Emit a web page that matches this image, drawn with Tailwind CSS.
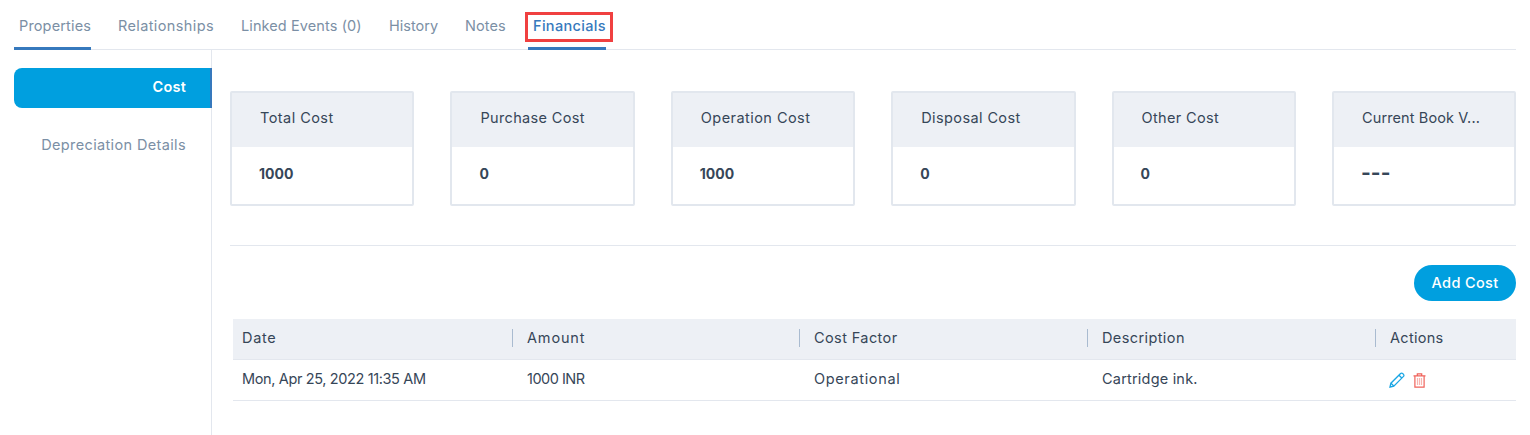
<!DOCTYPE html>
<html lang="en">
<head>
  <meta charset="UTF-8" />
  <title>Financials</title>
  <script src="https://cdn.jsdelivr.net/npm/@tailwindcss/browser@4"></script>
</head>
<body class="bg-white h-[435px] overflow-hidden font-['Inter','Noto_Sans',sans-serif] text-[14.5px] text-[#364658]">
  <div class="pl-[14px] pr-[14px]">
    <!-- tabs -->
    <nav class="flex items-start h-[50px] border-b border-[#e3e7ee] text-[#7b8fa5]">
      <a class="block h-[50px] w-[77px] pl-[5px] pt-[15px] border-b-[3px] border-[#3679bd] tracking-[0.15px]">Properties</a>
      <a class="block h-[50px] ml-[27px] w-[96px] pt-[15px] tracking-[0.38px] whitespace-nowrap">Relationships</a>
      <a class="block h-[50px] ml-[27px] w-[121px] pt-[15px] tracking-[0.1px] whitespace-nowrap">Linked Events (0)</a>
      <a class="block h-[50px] ml-[27px] w-[49px] pt-[15px]">History</a>
      <a class="block h-[50px] ml-[27px] w-[41px] pt-[15px] tracking-[0.1px]">Notes</a>
      <a class="relative block h-[50px] ml-[22px] w-[78px] pl-[5px] pt-[15px] border-b-[3px] border-[#3679bd] text-[#3679bd] font-medium tracking-[0.33px]">
        Financials
        <span class="absolute left-[-3px] top-[12px] w-[88px] h-[30px] border-[3px] border-[#f04040]"></span>
      </a>
    </nav>

    <div class="flex">
      <!-- side menu -->
      <aside class="w-[198px] h-[385px] shrink-0 border-r border-[#e3e7ee] pt-[18px] text-right">
        <div class="h-[40px] -mr-px flex items-center justify-end pr-[24px] pb-[2px] bg-[#009fdf] text-white font-semibold tracking-[0.2px] rounded-l-[8px] border-r-2 border-[#3679bd]">Cost</div>
        <div class="h-[40px] mt-[17px] flex items-center justify-end pr-[25px] text-[#7b8fa5] tracking-[0.36px]">Depreciation Details</div>
      </aside>

      <!-- content -->
      <main class="flex-1 pl-[18px] min-w-0">
        <div class="w-[1286.4px] grid grid-cols-6 gap-x-[36px] mt-[41px] pb-[39px] border-b border-[#e3e7ee]">
          <div class="h-[115px] border-2 border-[#e2e7ee] rounded-[2px]">
            <div class="h-[54px] bg-[#edf0f5] flex items-center pl-[28px] pb-[5px] tracking-[0.45px]">Total Cost</div>
            <div class="pl-[27px] pt-[16px] text-[14px] font-bold">1000</div>
          </div>
          <div class="h-[115px] border-2 border-[#e2e7ee] rounded-[2px]">
            <div class="h-[54px] bg-[#edf0f5] flex items-center pl-[28px] pb-[5px] tracking-[0.35px]">Purchase Cost</div>
            <div class="pl-[27px] pt-[16px] text-[14px] font-bold">0</div>
          </div>
          <div class="h-[115px] border-2 border-[#e2e7ee] rounded-[2px]">
            <div class="h-[54px] bg-[#edf0f5] flex items-center pl-[28px] pb-[5px] tracking-[0.45px]">Operation Cost</div>
            <div class="pl-[27px] pt-[16px] text-[14px] font-bold">1000</div>
          </div>
          <div class="h-[115px] border-2 border-[#e2e7ee] rounded-[2px]">
            <div class="h-[54px] bg-[#edf0f5] flex items-center pl-[28px] pb-[5px] tracking-[0.4px]">Disposal Cost</div>
            <div class="pl-[27px] pt-[16px] text-[14px] font-bold">0</div>
          </div>
          <div class="h-[115px] border-2 border-[#e2e7ee] rounded-[2px]">
            <div class="h-[54px] bg-[#edf0f5] flex items-center pl-[28px] pb-[5px] tracking-[0.35px]">Other Cost</div>
            <div class="pl-[27px] pt-[16px] text-[14px] font-bold">0</div>
          </div>
          <div class="h-[115px] border-2 border-[#e2e7ee] rounded-[2px]">
            <div class="h-[54px] bg-[#edf0f5] flex items-center pl-[28px] pb-[5px] tracking-[0.12px] whitespace-nowrap">Current Book V...</div>
            <div class="pl-[27px] pt-[16px] text-[21px] leading-[20px] font-bold">---</div>
          </div>
        </div>

        <div class="flex justify-end mt-[19px]">
          <button class="w-[102px] h-[36px] pb-px rounded-full bg-[#009fdf] text-white font-medium tracking-[0.35px]">Add Cost</button>
        </div>

        <!-- cost table -->
        <div class="ml-[3px] mt-[18px]">
          <div class="grid grid-cols-[279px_287px_288px_288px_1fr] h-[41px] pb-[2px] items-center bg-[#edf0f5] border-b border-[#e3e7ee]">
            <div class="pl-[9px] tracking-[0.7px]">Date</div>
            <div class="border-l border-[#a9bbd0] pl-[14px] h-[18px] flex items-center tracking-[0.85px]">Amount</div>
            <div class="border-l border-[#a9bbd0] pl-[14px] h-[18px] flex items-center tracking-[0.4px]">Cost Factor</div>
            <div class="border-l border-[#a9bbd0] pl-[14px] h-[18px] flex items-center tracking-[0.4px]">Description</div>
            <div class="border-l border-[#a9bbd0] pl-[14px] h-[18px] flex items-center tracking-[0.3px]">Actions</div>
          </div>
          <div class="grid grid-cols-[279px_287px_288px_288px_1fr] h-[41px] pb-[3px] items-center border-b border-[#e3e7ee]">
            <div class="pl-[9px] tracking-[-0.37px]">Mon, Apr 25, 2022 11:35 AM</div>
            <div class="pl-[15px] tracking-[-0.5px]">1000 INR</div>
            <div class="pl-[15px] tracking-[0.65px]">Operational</div>
            <div class="pl-[15px] tracking-[0.2px]">Cartridge ink.</div>
            <div class="pl-[14px] flex items-center gap-[8px] pt-[3px]">
              <svg width="16" height="16" viewBox="0 0 16 16" fill="none" stroke="#1ba6e4" stroke-width="1.3">
                <path d="M1 15l.9-3.8L11.6 1.5a1.4 1.4 0 0 1 2 0l.9.9a1.4 1.4 0 0 1 0 2L4.8 14.1z" />
                <path d="M10 3.2l2.8 2.8M2 11.2l2.8 2.8" />
              </svg>
              <svg width="13" height="15" viewBox="0 0 13 15" fill="none" stroke="#f0625a" stroke-width="1.2">
                <path d="M.5 2.8h12M4.3 2.6V.8h4.4v1.8M1.9 2.8v11.4h9.2V2.8" />
                <path d="M4.5 5v7M6.5 5v7M8.5 5v7" stroke="#f8b5b0" />
              </svg>
            </div>
          </div>
        </div>
      </main>
    </div>
  </div>
</body>
</html>
